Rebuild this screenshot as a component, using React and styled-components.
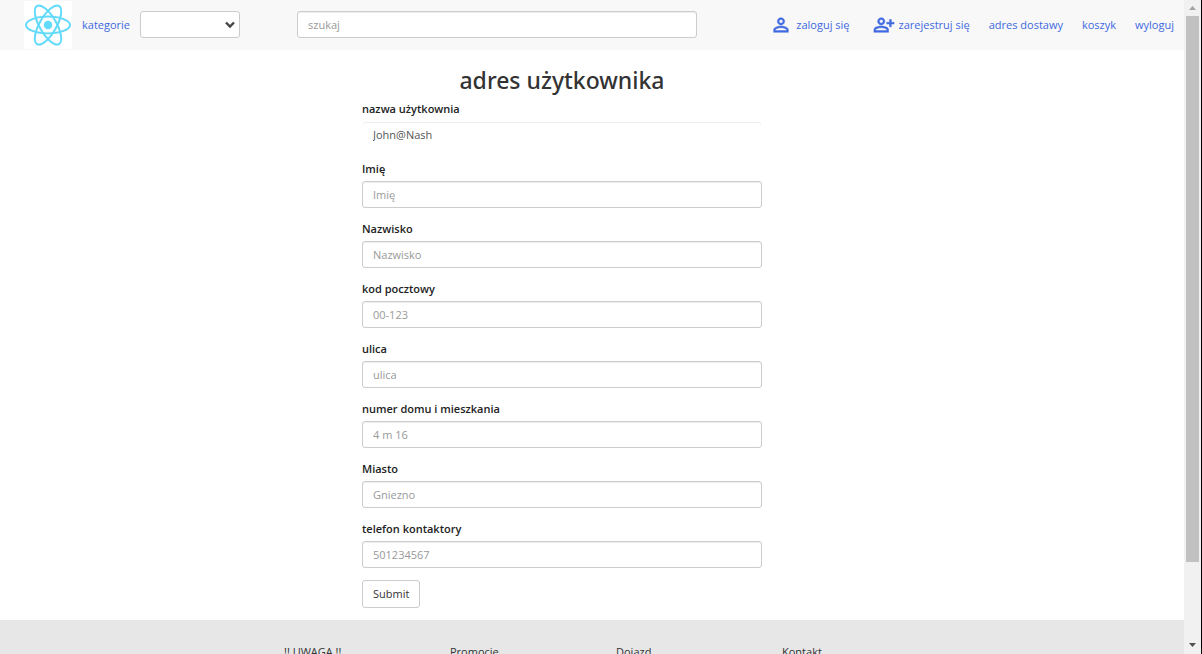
import React from 'react';
import styled, { createGlobalStyle } from 'styled-components';
import { MdPersonOutline, MdOutlinePersonAddAlt } from 'react-icons/md';

const GlobalStyle = createGlobalStyle`
  * { box-sizing: border-box; }
  body {
    margin: 0;
    background: #fff;
    color: #333;
    font-family: 'Open Sans', 'Noto Sans', sans-serif;
    font-size: 11px;
    line-height: 16px;
  }
  input, select, button { font: inherit; }
`;

const Shell = styled.div`
  display: flex;
  height: 100vh;
  overflow: hidden;
  border-right: 1px solid #000;
`;

const Page = styled.div`
  flex: 1;
  min-width: 0;
  height: 100%;
  overflow: hidden;
`;

const Header = styled.header`
  display: flex;
  align-items: center;
  height: 50px;
  padding: 0 10px 0 24px;
  background: #f8f8f8;
`;

const LogoLink = styled.a`
  display: flex;
  width: 48px;
  height: 48px;
  margin-right: 10px;
  background: #fff;
`;

const CategoryLabel = styled.label`
  width: 58px;
  color: royalblue;
`;

const controlStyle = `
  height: 27px;
  border: 1px solid #ccc;
  border-radius: 3px;
  background: #fff;
  color: #555;
`;

const SelectWrap = styled.div`
  position: relative;
  width: 100px;
  margin-right: 57px;
  padding-bottom: 1px;
`;

const Select = styled.select`
  ${controlStyle}
  display: block;
  width: 100%;
  padding: 0 20px 0 10px;
  appearance: none;
`;

const Chevron = styled.svg`
  position: absolute;
  right: 5px;
  top: 10px;
  pointer-events: none;
`;

const Input = styled.input`
  ${controlStyle}
  display: block;
  width: 100%;
  padding: 0 10px;
  box-shadow: inset 0 1px 1px rgba(0, 0, 0, 0.075);
  &::placeholder { color: #999; opacity: 1; }
  &:read-only {
    border-color: transparent;
    box-shadow: inset 0 1px 1px rgba(0, 0, 0, 0.075);
  }
`;

const Search = styled.form`
  flex: 0 1 400px;
  padding-bottom: 1px;
`;

const Nav = styled.nav`
  display: flex;
  align-items: center;
  gap: 19px;
  margin-left: auto;
`;

const NavLink = styled.a`
  display: flex;
  align-items: center;
  gap: 4px;
  margin-right: ${(p) => (p.$spaced ? 4 : 0)}px;
  color: royalblue;
  text-decoration: none;
  white-space: nowrap;
  svg path:last-child { stroke: currentColor; stroke-width: 0.5; }
`;

const Main = styled.main`
  display: flex;
  justify-content: center;
  padding: 14px 60px 12px 0;
`;

const AddressForm = styled.form`
  width: 400px;
`;

const Title = styled.h1`
  margin: 0 0 4px;
  font-family: 'Noto Sans', 'Open Sans', sans-serif;
  font-size: 23px;
  line-height: 33px;
  font-weight: 500;
  text-align: center;
`;

const Field = styled.div`
  margin-bottom: 13px;
  &:last-of-type { margin-bottom: 12px; }
`;

const FieldLabel = styled.label`
  display: block;
  margin-bottom: 4px;
  font-weight: 600;
  color: #222;
`;

const SubmitButton = styled.button`
  height: 28px;
  padding: 0 10px;
  border: 1px solid #ccc;
  border-radius: 3px;
  background: #fff;
  color: #333;
`;

const Footer = styled.footer`
  display: flex;
  justify-content: center;
  height: 160px;
  padding: 24px 0 0 48px;
  background: #e7e7e7;
`;

const FooterColumn = styled.section`
  width: 166px;
`;

const ScrollTrack = styled.div`
  display: flex;
  flex-direction: column;
  width: 17px;
  background: #f1f1f1;
`;

const ScrollRail = styled.div`
  flex: 1;
  padding: 0 2px;
`;

const ScrollThumb = styled.div`
  height: 88%;
  background: #c1c1c1;
`;

const fields = [
  { id: 'username', label: 'nazwa użytkownia', value: 'John@Nash' },
  { id: 'firstname', label: 'Imię', placeholder: 'Imię' },
  { id: 'lastname', label: 'Nazwisko', placeholder: 'Nazwisko' },
  { id: 'postcode', label: 'kod pocztowy', placeholder: '00-123' },
  { id: 'street', label: 'ulica', placeholder: 'ulica' },
  { id: 'house', label: 'numer domu i mieszkania', placeholder: '4 m 16' },
  { id: 'city', label: 'Miasto', placeholder: 'Gniezno' },
  { id: 'phone', label: 'telefon kontaktory', placeholder: '501234567' },
];

function Logo() {
  return (
    <svg width="48" height="48" viewBox="-24 -24 48 48" aria-hidden="true">
      <circle r="4.2" fill="#61dafb" />
      <g fill="none" stroke="#61dafb" strokeWidth="2">
        <ellipse rx="22" ry="8.4" />
        <ellipse rx="22" ry="8.4" transform="rotate(60)" />
        <ellipse rx="22" ry="8.4" transform="rotate(120)" />
      </g>
    </svg>
  );
}

export default function App() {
  return (
    <>
      <GlobalStyle />
      <Shell>
        <Page>
          <Header>
            <LogoLink href="#" aria-label="React"><Logo /></LogoLink>
            <CategoryLabel htmlFor="category">kategorie</CategoryLabel>
            <SelectWrap>
              <Select id="category" defaultValue=""><option value="" /></Select>
              <Chevron width="10" height="8" viewBox="0 0 10 8">
                <path d="M1 1.5 5 5.5 9 1.5" fill="none" stroke="#444" strokeWidth="2.4" />
              </Chevron>
            </SelectWrap>
            <Search>
              <Input type="text" placeholder="szukaj" aria-label="szukaj" />
            </Search>
            <Nav>
              <NavLink href="#" $spaced><MdPersonOutline size={22} />zaloguj się</NavLink>
              <NavLink href="#"><MdOutlinePersonAddAlt size={22} />zarejestruj się</NavLink>
              <NavLink href="#">adres dostawy</NavLink>
              <NavLink href="#">koszyk</NavLink>
              <NavLink href="#">wyloguj</NavLink>
            </Nav>
          </Header>
          <Main>
            <AddressForm>
              <Title>adres użytkownika</Title>
              {fields.map((f) => (
                <Field key={f.id}>
                  <FieldLabel htmlFor={f.id}>{f.label}</FieldLabel>
                  <Input id={f.id} type="text" placeholder={f.placeholder} defaultValue={f.value} readOnly={Boolean(f.value)} />
                </Field>
              ))}
              <SubmitButton type="button">Submit</SubmitButton>
            </AddressForm>
          </Main>
          <Footer>
            <FooterColumn>!! UWAGA !!</FooterColumn>
            <FooterColumn>Promocje</FooterColumn>
            <FooterColumn>Dojazd</FooterColumn>
            <FooterColumn>Kontakt</FooterColumn>
          </Footer>
        </Page>
        <ScrollTrack aria-hidden="true">
          <svg width="17" height="16" viewBox="0 0 17 16">
            <path d="M5 10h7L8.500 6z" fill="#a3a3a3" />
          </svg>
          <ScrollRail><ScrollThumb /></ScrollRail>
          <svg width="17" height="17" viewBox="0 0 17 17">
            <path d="M5 6h7L8.500 10z" fill="#505050" />
          </svg>
        </ScrollTrack>
      </Shell>
    </>
  );
}
